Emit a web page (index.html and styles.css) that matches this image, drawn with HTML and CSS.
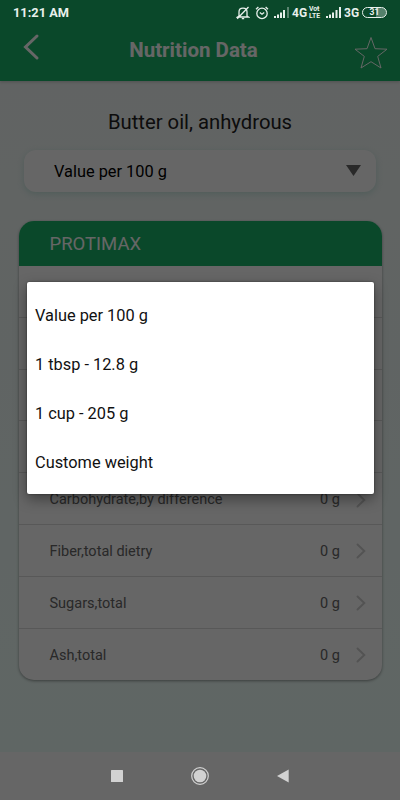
FILE: index.html
```
<!DOCTYPE html>
<html lang="en">

<head>
    <meta charset="UTF-8">
    <title>Nutrition Data</title>
    <link rel="stylesheet" href="styles.css">
</head>

<body>
    <div class="screen">
        <div class="header">
            <svg class="back" width="18" height="28" viewBox="0 0 18 28"><path d="M15 3L3.5 14L15 25"/></svg>
            <h1 class="title">Nutrition Data</h1>
            <svg class="star" width="34" height="34" viewBox="0 0 34 34"><path d="M17 1.5L21 12.7L33 13.2L23.7 20.4L27 32L17 25.7L7 32L10.3 20.4L1 13.2L13 12.7Z"/></svg>
        </div>

        <div class="content">
            <div class="food-name">Butter oil, anhydrous</div>
            <div class="select">
                <span>Value per 100 g</span>
                <svg width="15" height="11" viewBox="0 0 15 11"><path d="M0 0H15L7.5 11Z"/></svg>
            </div>

            <div class="card">
                <div class="card-title">PROTIMAX</div>
                <div class="row"></div>
                <div class="row"></div>
                <div class="row"></div>
                <div class="row"></div>
                <div class="row">
                    <span class="name">Carbohydrate,by difference</span>
                    <span class="value">0 g</span>
                    <svg class="arrow" width="10" height="16" viewBox="0 0 10 16"><path d="M1.5 1.5L8.3 8L1.5 14.5"/></svg>
                </div>
                <div class="row">
                    <span class="name">Fiber,total dietry</span>
                    <span class="value">0 g</span>
                    <svg class="arrow" width="10" height="16" viewBox="0 0 10 16"><path d="M1.5 1.5L8.3 8L1.5 14.5"/></svg>
                </div>
                <div class="row">
                    <span class="name">Sugars,total</span>
                    <span class="value">0 g</span>
                    <svg class="arrow" width="10" height="16" viewBox="0 0 10 16"><path d="M1.5 1.5L8.3 8L1.5 14.5"/></svg>
                </div>
                <div class="row">
                    <span class="name">Ash,total</span>
                    <span class="value">0 g</span>
                    <svg class="arrow" width="10" height="16" viewBox="0 0 10 16"><path d="M1.5 1.5L8.3 8L1.5 14.5"/></svg>
                </div>
            </div>
        </div>

        <div class="nav-bg"></div>
    </div>

    <div class="overlay">
        <div class="status-bar">
            <span class="time">11:21 AM</span>
            <!-- muted bell -->
            <svg class="bell" width="14" height="14" viewBox="0 0 14 14">
                <path d="M3 10V6C3 3.6 4.6 2.2 7 2.2C9.4 2.2 11 3.6 11 6V10L12.5 11H1.5L3 10ZM5.8 12.6H8.2M1.2 12.8L12.5 1"/>
            </svg>
            <!-- alarm clock -->
            <svg class="alarm" width="14" height="14" viewBox="0 0 14 14">
                <circle cx="7" cy="7.4" r="5.2"/>
                <path d="M1 3.3L3.4 1.1M13 3.3L10.6 1.1M4.8 6.4L7 8.2L9.2 6.4"/>
            </svg>
            <svg class="signal first" width="15" height="11" viewBox="0 0 15 11">
                <path d="M0 9h2v2H0zM3 7.5h2V11H3zM6 5.5h2V11H6zM9 3h2v8H9z"/>
                <path class="off" d="M13 0h2v11h-2z"/>
            </svg>
            <span class="net net-4g">4G</span>
            <span class="volte"><span>Vo&#359;</span><span>LTE</span></span>
            <svg class="signal second" width="15" height="11" viewBox="0 0 15 11">
                <path d="M0 9h2v2H0zM3 7.5h2V11H3zM6 5.5h2V11H6zM9.5 3h2v8h-2zM13 0h2v11h-2z"/>
            </svg>
            <span class="net net-3g">3G</span>
            <span class="battery">31</span>
        </div>

        <div class="popup">
            <div class="option">Value per 100 g</div>
            <div class="option">1 tbsp - 12.8 g</div>
            <div class="option">1 cup - 205 g</div>
            <div class="option">Custome weight</div>
        </div>

        <div class="nav-bar">
            <svg width="18" height="18" viewBox="0 0 18 18"><rect x="3" y="3" width="12" height="12" rx="0.5"/></svg>
            <svg width="18" height="18" viewBox="0 0 18 18"><circle cx="9" cy="9" r="6.3"/><circle class="ring" cx="9" cy="9" r="8.3"/></svg>
            <svg width="18" height="18" viewBox="0 0 18 18"><path d="M14.7 2.5V15.5L3 9Z"/></svg>
        </div>
    </div>
</body>

</html>
```
FILE: styles.css
```
* {
    box-sizing: border-box;
}

body {
    margin: 0;
    width: 400px;
    height: 800px;
    overflow: hidden;
    position: relative;
    font-family: Roboto, "Liberation Sans", sans-serif;
}

svg {
    display: block;
    flex: none;
}

.screen {
    height: 800px;
    display: flex;
    flex-direction: column;
    background: linear-gradient(#f3f8f7 80px, #eefffa 750px);
}

.header {
    height: 81px;
    padding: 24px 12px 6px 22px;
    display: flex;
    align-items: center;
    justify-content: space-between;
    background: #19b569;
    box-shadow: 0 1px 3px rgba(0, 0, 0, 0.2);
}

.back {
    margin-bottom: 5px;
    fill: none;
    stroke: #fff;
    stroke-width: 3;
    stroke-linecap: round;
}

.title {
    margin: 0 7px 0 0;
    color: #fff;
    font-size: 20.5px;
    font-weight: 700;
    line-height: 24px;
}

.star {
    margin-top: 6px;
    fill: none;
    stroke: #fff;
    stroke-width: 1;
}

.content {
    flex: 1;
    padding: 28px 18px 0;
}

.food-name {
    text-align: center;
    font-size: 20.25px;
    line-height: 26px;
    color: #222;
}

.select {
    height: 42px;
    margin: 15px 6px 0;
    padding: 1px 15px 0 30px;
    display: flex;
    align-items: center;
    justify-content: space-between;
    border-radius: 12px;
    background: #fff;
    box-shadow: 0 2px 6px rgba(100, 190, 170, 0.3);
    font-size: 16.35px;
    color: #000;
}

.select svg {
    margin-bottom: 2px;
    fill: #666;
}

.card {
    margin: 29px 0 0 0.5px;
    border-radius: 15px;
    overflow: hidden;
    background: #fff;
    box-shadow: 0 1px 3px rgba(0, 0, 0, 0.4);
}

.card-title {
    height: 45px;
    padding-left: 31px;
    line-height: 47px;
    font-size: 18.5px;
    color: #fff;
    background: #19b569;
}

.row {
    height: 51.8px;
    padding: 2px 16px 0 31px;
    display: flex;
    align-items: center;
    border-bottom: 1px solid #dcdcdc;
    font-size: 14.5px;
    color: #666;
}

.row:last-child {
    border-bottom: none;
}

.name {
    flex: 1;
}

.value {
    margin-right: 16px;
}

.arrow {
    fill: none;
    stroke: #d0d0d0;
    stroke-width: 2;
    stroke-linecap: round;
}

.nav-bg {
    height: 48px;
    background: #fff;
}

.overlay {
    position: absolute;
    top: 0;
    left: 0;
    width: 400px;
    height: 800px;
    display: flex;
    flex-direction: column;
    background: rgba(0, 0, 0, 0.6);
}

.status-bar {
    height: 25px;
    padding: 0 13px;
    display: flex;
    align-items: center;
    color: #e8f0ec;
    font-weight: 700;
    font-size: 12.8px;
}

.time {
    flex: 1;
}

.bell,
.alarm {
    fill: none;
    stroke: #e8f0ec;
    stroke-width: 1.3;
}

.bell {
    margin-right: 5px;
}

.signal {
    fill: #e8f0ec;
}

.signal .off {
    fill: #5b8470;
}

.first {
    margin: 0 3px 0 5px;
}

.second {
    margin: 0 3px 0 5px;
}

.net {
    width: 15px;
    white-space: nowrap;
    font-size: 12px;
}

.volte {
    width: 12px;
    margin-left: 2px;
    display: flex;
    flex-direction: column;
    font-size: 6.8px;
    line-height: 7px;
}

.battery {
    width: 25px;
    height: 11px;
    margin-left: 3px;
    border: 1px solid #e8f0ec;
    border-radius: 6px;
    text-align: center;
    font-size: 8.5px;
    line-height: 9px;
    background: linear-gradient(90deg, #0a482a 55%, #54806b 55%);
}

.popup {
    width: 347px;
    height: 212px;
    margin: 257px 0 0 26.5px;
    padding: 9px 8.5px 7px;
    border-radius: 2px;
    background: #fff;
    box-shadow: 0 5px 14px rgba(0, 0, 0, 0.4), 0 0 2px rgba(0, 0, 0, 0.5);
}

.option {
    height: 49px;
    line-height: 49px;
    font-size: 16.35px;
    color: #111;
}

.nav-bar {
    height: 48px;
    margin-top: auto;
    padding: 0 108px;
    display: flex;
    align-items: center;
    justify-content: space-between;
    fill: #d2d2d2;
}

.ring {
    fill: none;
    stroke: #d2d2d2;
    stroke-width: 1.2;
}
```
